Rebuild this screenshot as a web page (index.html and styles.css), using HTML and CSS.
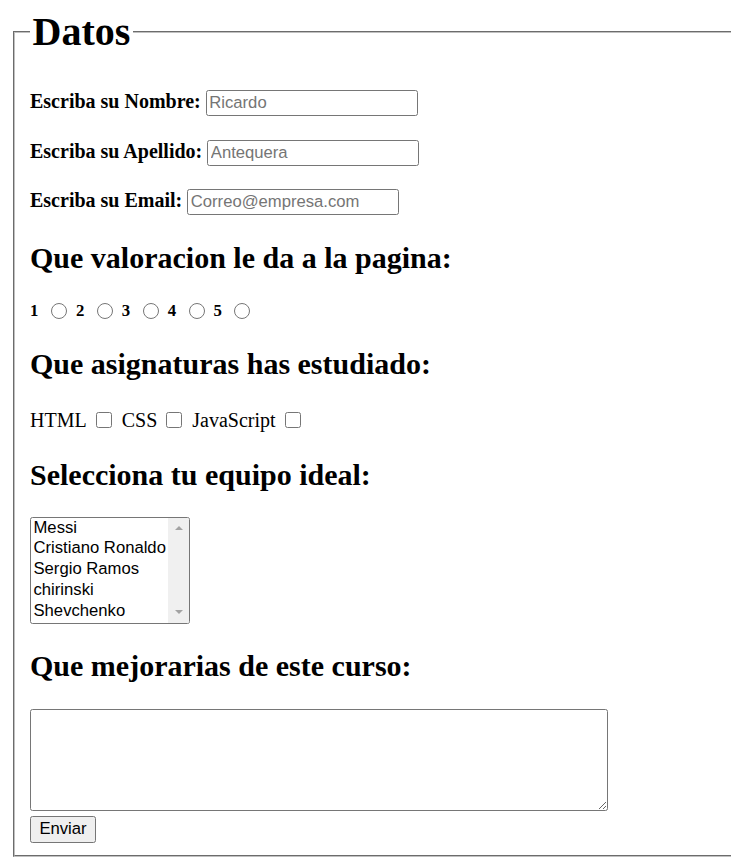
FILE: index.html
```html
<!DOCTYPE html>
<html lang="es">
<head>
<meta charset="utf-8">
<title>Formulario</title>
<link rel="stylesheet" href="styles.css">
</head>
<body>
<form class="formulario">
  <fieldset class="datos">
    <legend class="titulo">Datos</legend>

    <div class="campo">
      <label class="etiqueta" for="nombre">Escriba su Nombre:</label>
      <input class="texto texto-nombre" id="nombre" type="text" placeholder="Ricardo">
    </div>
    <div class="campo">
      <label class="etiqueta" for="apellido">Escriba su Apellido:</label>
      <input class="texto texto-apellido" id="apellido" type="text" placeholder="Antequera">
    </div>
    <div class="campo">
      <label class="etiqueta" for="email">Escriba su Email:</label>
      <input class="texto texto-email" id="email" type="email" placeholder="Correo@empresa.com">
    </div>

    <h2 class="pregunta">Que valoracion le da a la pagina:</h2>
    <div class="valoracion">
      <span class="numero">1</span><input class="radio" type="radio" name="valor" value="1">
      <span class="numero">2</span><input class="radio" type="radio" name="valor" value="2">
      <span class="numero">3</span><input class="radio" type="radio" name="valor" value="3">
      <span class="numero">4</span><input class="radio" type="radio" name="valor" value="4">
      <span class="numero">5</span><input class="radio" type="radio" name="valor" value="5">
    </div>

    <h2 class="pregunta">Que asignaturas has estudiado:</h2>
    <div class="asignaturas">
      <span class="asignatura">HTML</span><input class="check" type="checkbox" value="html">
      <span class="asignatura">CSS</span><input class="check" type="checkbox" value="css">
      <span class="asignatura">JavaScript</span><input class="check" type="checkbox" value="js">
    </div>

    <h2 class="pregunta">Selecciona tu equipo ideal:</h2>
    <div class="lista" role="listbox" aria-label="Equipo ideal">
      <ul class="lista-opciones">
        <li class="opcion" role="option">Messi</li>
        <li class="opcion" role="option">Cristiano Ronaldo</li>
        <li class="opcion" role="option">Sergio Ramos</li>
        <li class="opcion" role="option">chirinski</li>
        <li class="opcion" role="option">Shevchenko</li>
      </ul>
      <div class="barra">
        <span class="boton-barra"><span class="flecha flecha-arriba"></span></span>
        <span class="boton-barra"><span class="flecha flecha-abajo"></span></span>
      </div>
    </div>

    <h2 class="pregunta">Que mejorarias de este curso:</h2>
    <textarea class="comentario"></textarea>
    <button class="enviar" type="button">Enviar</button>
  </fieldset>
</form>
</body>
</html>
```

FILE: styles.css
```css
html, body {
  margin: 0;
  padding: 0;
}

body {
  padding: 10px 0 0 10px;
  font-family: "Liberation Serif", "Times New Roman", serif;
  font-size: 20px;
  color: #000;
  background: #fff;
}

.formulario {
  margin: 0;
}

.datos {
  margin: 0 0 0 3px;
  padding: 12.5px 15px 12px 15px;
  border: 2px groove rgb(192, 192, 192);
  border-right: 0;
  min-width: 0;
}

.titulo {
  padding: 0 2.5px;
  font-size: 40px;
  line-height: 44px;
  font-weight: bold;
}

.campo {
  display: flex;
  align-items: baseline;
  height: 26px;
  margin-top: 23.5px;
}

.etiqueta {
  font-weight: bold;
  font-size: 20px;
  margin-right: 5px;
}

.texto {
  box-sizing: border-box;
  width: 212px;
  height: 26px;
  margin: 0;
  padding: 1px 2.5px;
  border: 1px solid #767676;
  border-radius: 2.5px;
  font-family: "Liberation Sans", Arial, sans-serif;
  font-size: 16.67px;
  color: #000;
  background: #fff;
}

.texto::placeholder {
  color: #757575;
}

.pregunta {
  margin: 25.5px 0 0;
  font-size: 30px;
  line-height: 34px;
  font-weight: bold;
}

.valoracion {
  display: flex;
  align-items: center;
  height: 20px;
  margin-top: 26.5px;
}

.numero {
  font-weight: bold;
  font-size: 16.8px;
  line-height: 20px;
}

.radio {
  width: 16px;
  height: 16px;
  margin: 0 9px 0 12.5px;
}

.asignaturas {
  display: flex;
  align-items: center;
  height: 23px;
  margin-top: 28.5px;
}

.asignatura {
  font-size: 20px;
  line-height: 23px;
}

.check {
  width: 16px;
  height: 16px;
  margin: -1px 10px 0 9px;
}

.lista {
  box-sizing: border-box;
  display: flex;
  width: 160px;
  height: 107px;
  margin-top: 25px;
  border: 1px solid #767676;
  border-radius: 2.5px;
  background: #fff;
  overflow: hidden;
}

.lista-opciones {
  flex: 1;
  margin: 0;
  padding: 0;
  list-style: none;
  font-family: "Liberation Sans", Arial, sans-serif;
  font-size: 16.67px;
}

.opcion {
  padding: 0 2.5px 1.6px;
  line-height: 19.2px;
  white-space: nowrap;
}

.barra {
  display: flex;
  flex-direction: column;
  justify-content: space-between;
  width: 21px;
  background: #f0f0f0;
}

.boton-barra {
  display: flex;
  align-items: center;
  justify-content: center;
  height: 21px;
}

.flecha {
  width: 0;
  height: 0;
  border-left: 4.5px solid transparent;
  border-right: 4.5px solid transparent;
}

.flecha-arriba {
  border-bottom: 4.5px solid #a3a3a3;
}

.flecha-abajo {
  border-top: 4.5px solid #a3a3a3;
}

.comentario {
  display: block;
  box-sizing: border-box;
  width: 578px;
  height: 102px;
  margin: 25.5px 0 0;
  padding: 2.5px;
  border: 1px solid #767676;
  border-radius: 2.5px;
  font-family: "Liberation Mono", monospace;
  font-size: 16.67px;
}

.enviar {
  display: block;
  box-sizing: border-box;
  width: 66px;
  height: 27px;
  margin-top: 5px;
  padding: 1px 7.5px;
  border: 1px solid #767676;
  border-radius: 2.5px;
  background: #efefef;
  font-family: "Liberation Sans", Arial, sans-serif;
  font-size: 16.67px;
  color: #000;
}
```
